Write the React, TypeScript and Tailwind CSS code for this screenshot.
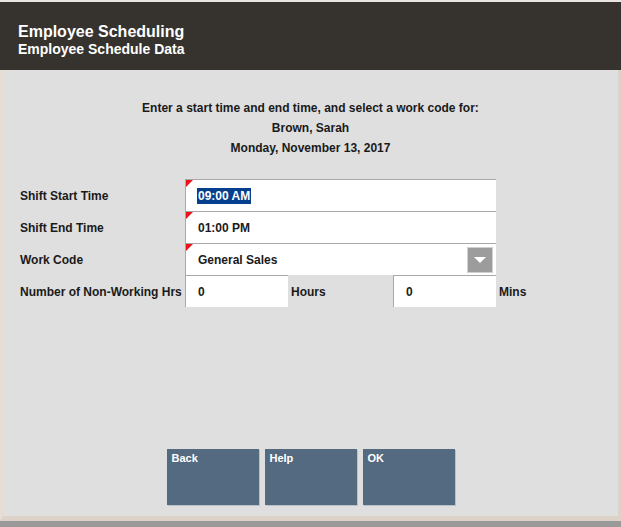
import React from "react";

const font = { fontFamily: '"Liberation Sans", Arial, sans-serif' };

function Flag() {
  return (
    <span className="absolute left-0 top-0 h-0 w-0 border-t-[7px] border-r-[7px] border-t-[#e8141b] border-r-transparent" />
  );
}

function Field({ children, flag = true, className = "" }: { children?: React.ReactNode; flag?: boolean; className?: string }) {
  return (
    <div className={`relative flex h-[32px] items-center bg-white border-t border-l border-[#a8a8a8] pl-[11px] pt-[1px] ${className}`}>
      {flag && <Flag />}
      {children}
    </div>
  );
}

function Row({ label, children }: { label: string; children: React.ReactNode }) {
  return (
    <div className="flex items-center">
      <div className="w-[165px] pt-[2px] text-[12px] font-bold text-[#1a1a1a]">{label}</div>
      {children}
    </div>
  );
}

export default function App() {
  return (
    <div style={font} className="flex h-[527px] w-[621px] flex-col overflow-hidden bg-[#dfdfdf]">
      <div className="h-[2px] bg-[#e9e5e1]" />
      <header className="flex h-[68px] flex-col justify-center bg-[#36332f] pl-[18px] pt-[7px] text-white">
        <div className="text-[16px] font-bold leading-[18px]">Employee Scheduling</div>
        <div className="text-[14px] font-bold leading-[16px]">Employee Schedule Data</div>
      </header>
      <div className="flex flex-1 border-l-[3px] border-r-[3px] border-b-[5px] border-l-[#e6ddd5] border-r-[#ddd2c8] border-b-[#ddd2c8]">
        <main className="flex flex-1 flex-col">
          <div className="pt-[28px] text-center text-[12px] font-bold leading-[20px] text-[#1a1a1a]">
            <div>Enter a start time and end time, and select a work code for:</div>
            <div>Brown, Sarah</div>
            <div>Monday, November 13, 2017</div>
          </div>

          <div className="mt-[21px] flex flex-col pl-[17px]">
            <Row label="Shift Start Time">
              <Field className="w-[311px]">
                <span className="bg-[#053f8e] px-[1px] text-[12px] font-bold leading-[16px] text-white">09:00 AM</span>
              </Field>
            </Row>
            <Row label="Shift End Time">
              <Field className="w-[311px]">
                <span className="pl-[1px] text-[12px] font-bold text-[#1a1a1a]">01:00 PM</span>
              </Field>
            </Row>
            <Row label="Work Code">
              <Field className="w-[311px] justify-between pr-[3px]">
                <span className="pl-[1px] text-[12px] font-bold text-[#1a1a1a]">General Sales</span>
                <div className="flex h-[26px] w-[26px] items-center justify-center border border-[#d0d0d0] bg-[#9c9c9c]">
                  <span className="h-0 w-0 border-x-[6px] border-t-[6px] border-x-transparent border-t-white" />
                </div>
              </Field>
            </Row>
            <Row label="Number of Non-Working Hrs">
              <Field flag={false} className="w-[103px]">
                <span className="pl-[1px] text-[12px] font-bold text-[#1a1a1a]">0</span>
              </Field>
              <span className="w-[105px] pl-[3px] pt-[2px] text-[12px] font-bold text-[#1a1a1a]">Hours</span>
              <Field flag={false} className="w-[103px]">
                <span className="pl-[1px] text-[12px] font-bold text-[#1a1a1a]">0</span>
              </Field>
              <span className="pl-[3px] pt-[2px] text-[12px] font-bold text-[#1a1a1a]">Mins</span>
            </Row>
          </div>

          <div className="mt-auto flex justify-center gap-[6px] pb-[11px]">
            {["Back", "Help", "OK"].map((b) => (
              <button
                key={b}
                className="flex h-[56px] w-[92px] items-start bg-[#546a80] px-[5px] pt-[2px] text-left text-[11px] font-bold leading-[14px] text-white shadow-[1px_1px_0_#b8c0c8]"
              >
                {b}
              </button>
            ))}
          </div>
        </main>
      </div>
      <div className="h-[6px] bg-[#9a9a9a]" />
    </div>
  );
}
